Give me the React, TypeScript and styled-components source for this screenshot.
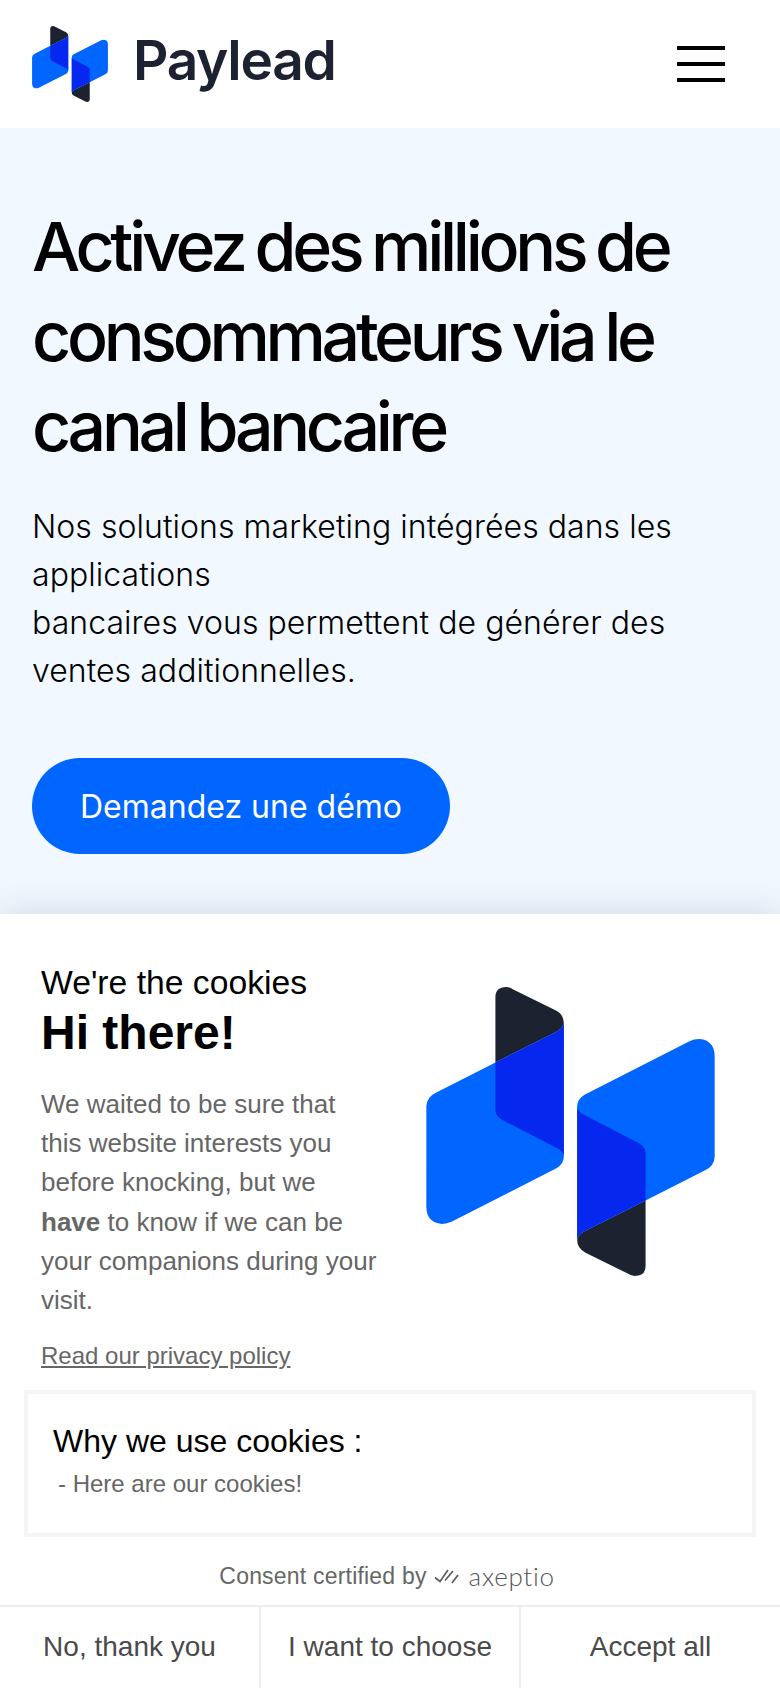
import { FC } from "react";
import styled, { createGlobalStyle } from "styled-components";

const GlobalStyle = createGlobalStyle`
  * {
    box-sizing: border-box;
  }

  body {
    margin: 0;
    background: #fff;
    font-family: "Liberation Sans", Arial, sans-serif;
  }
`;

const PaymentMark: FC<{ size: number }> = ({ size }) => {
  const half = (
    <>
      <path
        fill="#1c2230"
        d="M285 112Q285 82 318 82Q328 82 340 90L465 152Q490 165 490 190Q488 205 470 215L285 308Z"
      />
      <path
        fill="#0066ff"
        d="M78 440Q78 412 108 398L285 308L470 215Q488 205 490 190V590Q490 612 468 625L155 785Q120 800 95 782Q78 770 78 740Z"
      />
      <path
        fill="#0527ee"
        d="M285 308L470 215Q488 205 490 190V590Q490 575 470 565L305 480Q285 470 285 450Z"
      />
    </>
  );

  return (
    <svg width={size} height={size} viewBox="78 82 864 866">
      {half}
      <g transform="rotate(180 510 515)">{half}</g>
    </svg>
  );
};

const App: FC = () => {
  return (
    <Page>
      <GlobalStyle />
      <Header>
        <Brand>
          <PaymentMark size={76} />
          <BrandName>Paylead</BrandName>
        </Brand>
        <Burger>
          <span />
          <span />
          <span />
        </Burger>
      </Header>

      <Hero>
        <Title>Activez des millions de consommateurs via le canal bancaire</Title>
        <Lead>
          Nos solutions marketing intégrées dans les applications
          <br />
          bancaires vous permettent de générer des ventes additionnelles.
        </Lead>
        <DemoButton>Demandez une démo</DemoButton>
      </Hero>

      <CookiePanel>
        <Intro>
          <IntroCopy>
            <Kicker>We're the cookies</Kicker>
            <Hello>Hi there!</Hello>
            <Message>
              We waited to be sure that this website interests you before
              knocking, but we <b>have</b> to know if we can be your companions
              during your visit.
            </Message>
            <Policy href="#">Read our privacy policy</Policy>
          </IntroCopy>
          <IntroMark>
            <PaymentMark size={289} />
          </IntroMark>
        </Intro>

        <WhyBox>
          <WhyTitle>Why we use cookies :</WhyTitle>
          <WhyItem>- Here are our cookies!</WhyItem>
        </WhyBox>

        <Certified>
          Consent certified by
          <svg width="26" height="18" viewBox="0 0 26 18" fill="none" stroke="#5c5c5c" strokeWidth="1.7">
            <path d="M1 10.5l5 4L14 3" />
            <path d="M11 13.5L19 4" />
            <path d="M18 16l6-8" />
          </svg>
          <AxeptioName>axeptio</AxeptioName>
        </Certified>

        <Choices>
          <Choice>No, thank you</Choice>
          <Choice>I want to choose</Choice>
          <Choice>Accept all</Choice>
        </Choices>
      </CookiePanel>
    </Page>
  );
};

const Page = styled.div`
  position: relative;
  height: 1688px;
  overflow: hidden;
`;

const Header = styled.header`
  height: 128px;
  padding: 0 55px 0 32px;
  display: flex;
  align-items: center;
  justify-content: space-between;
  background: #fff;
`;

const Brand = styled.div`
  display: flex;
  align-items: center;
  gap: 25px;
`;

const BrandName = styled.span`
  margin-top: -9px;
  font-family: Inter, sans-serif;
  font-size: 55px;
  font-weight: 600;
  letter-spacing: -1.3px;
  color: #1c2230;
`;

const Burger = styled.div`
  width: 48px;
  display: flex;
  flex-direction: column;
  gap: 12.5px;

  span {
    height: 3.5px;
    background: #000;
  }
`;

const Hero = styled.section`
  height: 800px;
  padding: 73px 32px 0;
  background: #f2f8ff;
`;

const Title = styled.h1`
  margin: 0;
  font-family: Inter, sans-serif;
  font-size: 68px;
  font-weight: 500;
  line-height: 90px;
  letter-spacing: -4.3px;
  word-spacing: -3px;
  color: #000;
`;

const Lead = styled.p`
  margin: 32px 0 0;
  font-family: Inter, sans-serif;
  font-size: 32px;
  font-weight: 300;
  line-height: 48px;
  letter-spacing: 0.05px;
  color: #000;
`;

const DemoButton = styled.button`
  display: block;
  width: 418px;
  height: 96px;
  margin-top: 63px;
  border: 0;
  border-radius: 48px;
  background: #0066ff;
  color: #fff;
  font-family: Inter, sans-serif;
  font-size: 32px;
  letter-spacing: 0;
`;

const CookiePanel = styled.aside`
  position: absolute;
  left: 0;
  right: 0;
  bottom: 0;
  height: 774px;
  background: #fff;
  box-shadow: 0 0 36px rgba(30, 40, 80, 0.16);
  display: flex;
  flex-direction: column;
`;

const Intro = styled.div`
  display: flex;
  padding: 49px 0 0 41px;
  height: 476px;
`;

const IntroCopy = styled.div`
  width: 339px;
`;

const IntroMark = styled.div`
  margin: 24px 0 0 46px;
`;

const Kicker = styled.div`
  font-size: 33.7px;
  line-height: 38px;
  color: #000;
`;

const Hello = styled.div`
  margin-top: 6px;
  font-size: 48px;
  font-weight: 700;
  line-height: 52px;
  color: #000;
`;

const Message = styled.p`
  margin: 26px 0 0;
  font-size: 26px;
  line-height: 39.2px;
  color: #666;

  b {
    font-weight: 700;
  }
`;

const Policy = styled.a`
  display: block;
  margin-top: 21px;
  font-size: 24px;
  line-height: 30px;
  color: #666;
`;

const WhyBox = styled.div`
  height: 147px;
  margin: 0 24px;
  padding: 28px 25px 0;
  border: 4px solid #f5f5f5;
`;

const WhyTitle = styled.div`
  font-size: 32px;
  line-height: 38px;
  color: #000;
`;

const WhyItem = styled.div`
  margin: 9px 0 0 5px;
  font-size: 24px;
  line-height: 30px;
  color: #666;
`;

const Certified = styled.div`
  height: 68px;
  padding: 10px 6px 0 0;
  display: flex;
  align-items: center;
  justify-content: center;
  gap: 7px;
  font-size: 23px;
  letter-spacing: 0.2px;
  color: #666;
`;

const AxeptioName = styled.span`
  margin-left: 2px;
  font-family: Lato, sans-serif;
  font-size: 26px;
  font-weight: 300;
  letter-spacing: 0.7px;
  color: #555;
`;

const Choices = styled.div`
  flex: 1;
  display: grid;
  grid-template-columns: 259px 260px 1fr;
  border-top: 2px solid #eee;
`;

const Choice = styled.button`
  border: 0;
  border-left: 2px solid #eee;
  background: #fff;
  padding: 0 0 2px;
  font-family: "Liberation Sans", Arial, sans-serif;
  font-size: 28px;
  color: #4a4a4a;

  &:first-child {
    border-left: 0;
  }
`;

export default App;
